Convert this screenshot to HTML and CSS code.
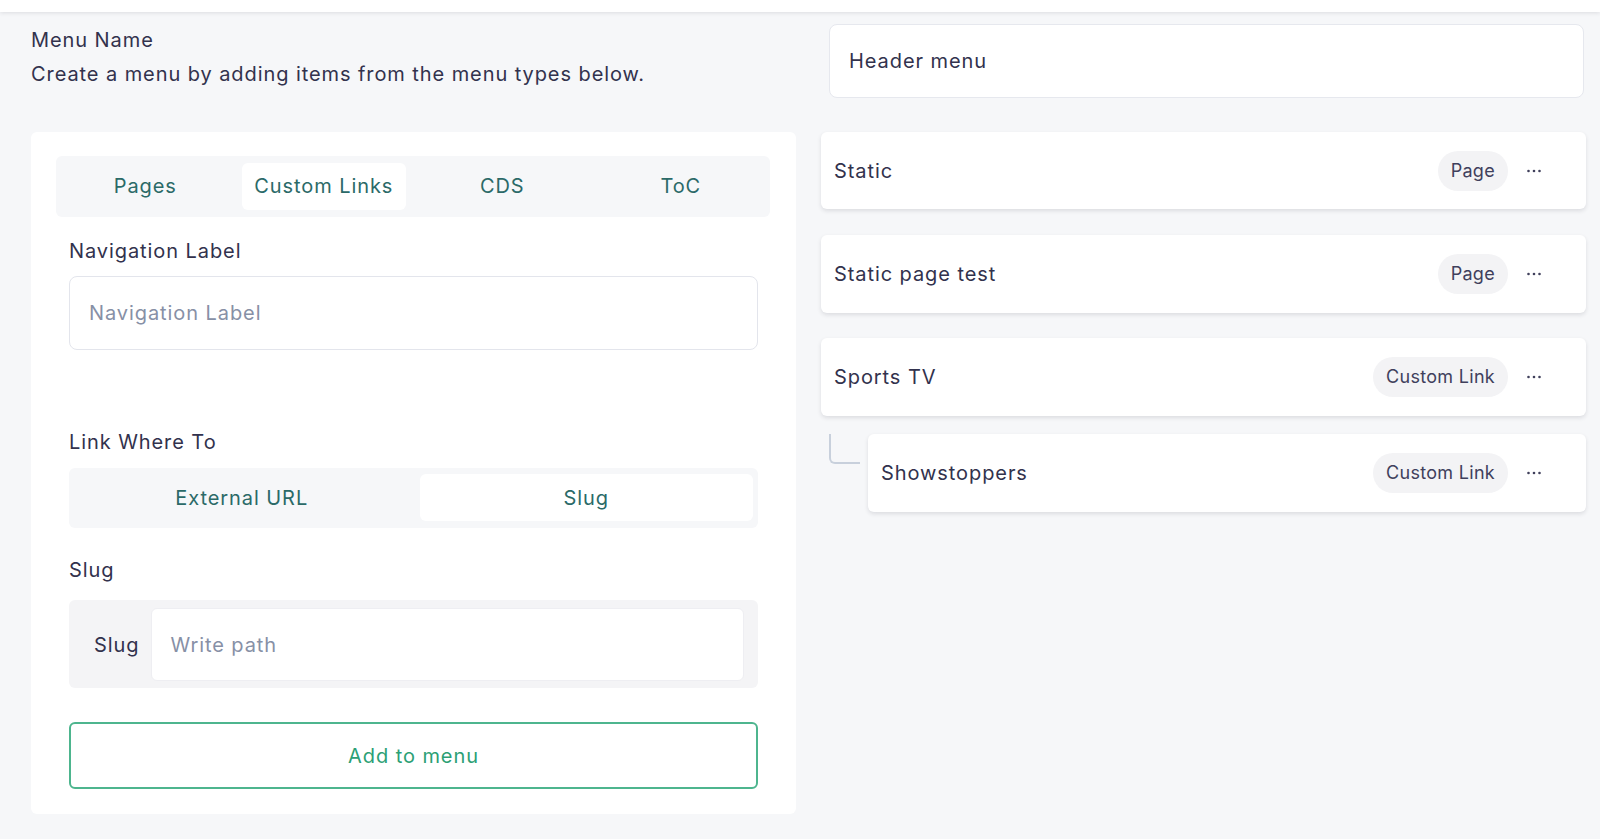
FILE: index.html
```html
<!DOCTYPE html>
<html lang="en">
<head>
<meta charset="utf-8">
<title>Menu editor</title>
<link rel="stylesheet" href="styles.css">
</head>
<body>
<div class="topbar"></div>
<div class="top">
  <div class="intro">
    <div class="intro-title">Menu Name</div>
    <div class="intro-desc">Create a menu by adding items from the menu types below.</div>
  </div>
  <div class="name-field">
    <div class="name-input">Header menu</div>
  </div>
</div>
<div class="main">
  <div class="card">
    <div class="tabs">
      <div class="tab">Pages</div>
      <div class="tab tab-active">Custom Links</div>
      <div class="tab">CDS</div>
      <div class="tab">ToC</div>
    </div>
    <div class="form">
      <div class="label label-nav">Navigation Label</div>
      <div class="input"><span class="placeholder">Navigation Label</span></div>
      <div class="label label-link">Link Where To</div>
      <div class="toggle">
        <div class="seg">External URL</div>
        <div class="seg seg-active">Slug</div>
      </div>
      <div class="label label-slug">Slug</div>
      <div class="group">
        <span class="prefix">Slug</span>
        <div class="group-input"><span class="placeholder">Write path</span></div>
      </div>
      <div class="add-btn">Add to menu</div>
    </div>
  </div>
  <div class="list">
    <div class="item">
      <span class="item-name">Static</span>
      <span class="badge">Page</span>
      <svg class="dots" width="14" height="4" viewBox="0 0 14 4"><circle cx="1.5" cy="2" r="1.3"/><circle cx="7" cy="2" r="1.3"/><circle cx="12.5" cy="2" r="1.3"/></svg>
    </div>
    <div class="item">
      <span class="item-name">Static page test</span>
      <span class="badge">Page</span>
      <svg class="dots" width="14" height="4" viewBox="0 0 14 4"><circle cx="1.5" cy="2" r="1.3"/><circle cx="7" cy="2" r="1.3"/><circle cx="12.5" cy="2" r="1.3"/></svg>
    </div>
    <div class="item">
      <span class="item-name">Sports TV</span>
      <span class="badge">Custom Link</span>
      <svg class="dots" width="14" height="4" viewBox="0 0 14 4"><circle cx="1.5" cy="2" r="1.3"/><circle cx="7" cy="2" r="1.3"/><circle cx="12.5" cy="2" r="1.3"/></svg>
    </div>
    <div class="child-row">
      <div class="connector-col"><div class="connector"></div></div>
      <div class="item item-child">
        <span class="item-name">Showstoppers</span>
        <span class="badge">Custom Link</span>
        <svg class="dots" width="14" height="4" viewBox="0 0 14 4"><circle cx="1.5" cy="2" r="1.3"/><circle cx="7" cy="2" r="1.3"/><circle cx="12.5" cy="2" r="1.3"/></svg>
      </div>
    </div>
  </div>
</div>
</body>
</html>
```
FILE: styles.css
```css
* { box-sizing: border-box; }
html, body { margin: 0; padding: 0; }
body {
  background: #f6f7f9;
  font-family: Inter, "Noto Sans", sans-serif;
  color: #32324d;
  font-size: 20px;
  letter-spacing: 0.92px;
  width: 1600px;
  height: 839px;
  overflow: hidden;
}
.topbar {
  height: 12px;
  background: #ffffff;
  box-shadow: 0 1px 4px rgba(33, 33, 52, 0.12);
  position: relative;
  z-index: 1;
}
.top {
  display: grid;
  grid-template-columns: 765px 765px;
  column-gap: 25px;
  padding-left: 31px;
  height: 120px;
}
.intro { padding-top: 11px; }
.intro-title, .intro-desc { line-height: 34px; }
.name-field { padding: 12px 2px 0 8px; }
.name-input {
  height: 74px;
  background: #ffffff;
  border: 1px solid #e6e8ee;
  border-radius: 8px;
  padding: 0 19px;
  display: flex;
  align-items: center;
}
.main {
  display: grid;
  grid-template-columns: 765px 765px;
  column-gap: 25px;
  padding-left: 31px;
  align-items: start;
}
.card {
  background: #ffffff;
  border-radius: 6px;
  padding: 24px 26px 25px 25px;
}
.tabs {
  background: #f6f7f9;
  border-radius: 6px;
  padding: 7px;
  display: grid;
  grid-template-columns: repeat(4, 1fr);
  column-gap: 14px;
}
.tab {
  height: 47px;
  line-height: 47px;
  text-align: center;
  color: #2b6a68;
  border-radius: 6px;
}
.tab-active { background: #ffffff; }
.form { padding: 0 12px 0 13px; }
.label { line-height: 28px; }
.label-nav { margin-top: 20px; margin-bottom: 11px; }
.label-link { margin-top: 78px; margin-bottom: 12px; }
.label-slug { margin-top: 28px; margin-bottom: 16px; }
.placeholder { color: #8790a6; }
.input {
  height: 74px;
  border: 1px solid #e3e5ec;
  border-radius: 8px;
  padding: 0 19px;
  display: flex;
  align-items: center;
}
.toggle {
  height: 60px;
  background: #f6f7f9;
  border-radius: 6px;
  padding: 6px 5px 7px 6px;
  display: grid;
  grid-template-columns: 1fr 1fr;
  column-gap: 11px;
}
.seg {
  display: flex;
  align-items: center;
  justify-content: center;
  color: #2b6a68;
  border-radius: 6px;
}
.seg-active { background: #ffffff; }
.group {
  height: 88px;
  background: #f4f4f6;
  border-radius: 6px;
  padding: 8px 14px 7px 25px;
  display: flex;
  align-items: stretch;
}
.prefix {
  display: flex;
  align-items: center;
  margin-right: 12px;
}
.group-input {
  flex: 1;
  background: #ffffff;
  border: 1px solid #eeeef2;
  border-radius: 6px;
  padding: 0 18px;
  display: flex;
  align-items: center;
}
.add-btn {
  margin-top: 34px;
  height: 67px;
  border: 2px solid #4db58e;
  border-radius: 6px;
  color: #2c9f75;
  display: flex;
  align-items: center;
  justify-content: center;
}
.list {
  display: flex;
  flex-direction: column;
}
.item {
  height: 77px;
  background: #ffffff;
  border-radius: 6px;
  box-shadow: 0 2px 4px rgba(33, 33, 52, 0.12);
  padding: 0 45px 0 13px;
  display: flex;
  align-items: center;
}
.item + .item { margin-top: 26px; }
.item:nth-child(2) { height: 78px; }
.item:nth-child(3) { height: 78px; margin-top: 25px; }
.item-name { flex: 1; }
.badge {
  height: 40px;
  line-height: 40px;
  padding: 0 13px;
  border-radius: 20px;
  background: #f3f3f5;
  font-size: 18px;
  letter-spacing: 0.3px;
  color: #40405c;
}
.dots {
  margin-left: 19px;
  fill: #40405c;
}
.child-row {
  margin-top: 18px;
  display: flex;
}
.connector-col {
  width: 47px;
  flex: none;
  padding-left: 8px;
}
.connector {
  width: 31px;
  height: 30px;
  border-left: 2px solid #c8d0dc;
  border-bottom: 2px solid #c8d0dc;
  border-bottom-left-radius: 6px;
}
.item-child {
  flex: 1;
  height: 78px;
}
```
